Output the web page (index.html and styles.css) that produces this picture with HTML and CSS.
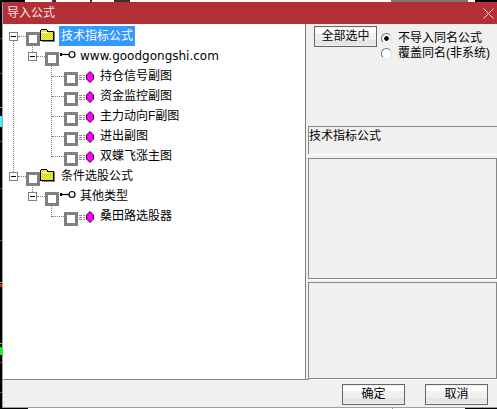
FILE: index.html
```html
<!DOCTYPE html>
<html lang="zh">
<head>
  <meta charset="UTF-8">
  <meta name="viewport" content="width=device-width, initial-scale=1.0">
  <title>导入公式</title>
  <link rel="stylesheet" href="styles.css">
</head>
<body>
  <svg class="defs" width="0" height="0">
    <defs>
      <pattern id="dither" width="2" height="2" patternUnits="userSpaceOnUse">
        <rect width="2" height="2" fill="#ffff00"/>
        <rect width="1" height="1" fill="#c8c860"/>
        <rect x="1" y="1" width="1" height="1" fill="#c8c860"/>
      </pattern>
      <symbol id="folder" viewBox="0 0 16 13">
        <path d="M.5 11.500V1.500L1.500 .5H6.500L8 2.500H13.500V11.500Z" fill="url(#dither)" stroke="#000" shape-rendering="crispEdges"/>
        <path d="M1 3.500H8" stroke="#fff" shape-rendering="crispEdges"/>
        <path d="M14.500 3V12.500H2" fill="none" stroke="#808080" shape-rendering="crispEdges"/>
      </symbol>
      <symbol id="key" viewBox="0 0 16 9">
        <path d="M1 3V6" stroke="#000" stroke-width="2"/>
        <path d="M1 4.500H10" stroke="#000" stroke-width="1.200"/>
        <circle cx="12" cy="4.500" r="3" fill="#fff" stroke="#000" stroke-width="1.200"/>
      </symbol>
      <symbol id="gem" viewBox="0 0 15 12">
        <path d="M0 4.500H6M0 6.500H6M0 8.500H6" stroke="#8c8c8c" stroke-dasharray="3 1"/>
        <path d="M11 .5L14.500 4V8L11 11.500L7.500 8V4Z" fill="#ff00ff" stroke="#300030"/>
      </symbol>
    </defs>
  </svg>

  <div class="dialog">
    <div class="titlebar">
      <span class="title">导入公式</span>
      <svg class="close" width="11" height="11" viewBox="0 0 11 11"><path d="M.5 .5L10.500 10.500M10.500 .5L.5 10.500" stroke="#f0d8d8"/></svg>
    </div>

    <div class="main">
      <ul class="tree">
        <li class="node">
          <div class="row">
            <span class="expander"></span><span class="dash"></span><span class="check"></span>
            <svg class="ico-folder"><use href="#folder"/></svg>
            <span class="label selected">技术指标公式</span>
          </div>
          <ul class="branch">
            <li class="node">
              <div class="row">
                <span class="expander"></span><span class="dash"></span><span class="check"></span>
                <svg class="ico-key"><use href="#key"/></svg>
                <span class="label plain latin">www.goodgongshi.com</span>
              </div>
              <ul class="leaves">
                <li class="row leaf"><span class="dash long"></span><span class="check"></span><svg class="ico-gem"><use href="#gem"/></svg><span class="label">持仓信号副图</span></li>
                <li class="row leaf"><span class="dash long"></span><span class="check"></span><svg class="ico-gem"><use href="#gem"/></svg><span class="label">资金监控副图</span></li>
                <li class="row leaf"><span class="dash long"></span><span class="check"></span><svg class="ico-gem"><use href="#gem"/></svg><span class="label">主力动向F副图</span></li>
                <li class="row leaf"><span class="dash long"></span><span class="check"></span><svg class="ico-gem"><use href="#gem"/></svg><span class="label">进出副图</span></li>
                <li class="row leaf"><span class="dash long"></span><span class="check"></span><svg class="ico-gem"><use href="#gem"/></svg><span class="label">双蝶飞涨主图</span></li>
              </ul>
            </li>
          </ul>
        </li>
        <li class="node">
          <div class="row">
            <span class="expander"></span><span class="dash"></span><span class="check"></span>
            <svg class="ico-folder"><use href="#folder"/></svg>
            <span class="label">条件选股公式</span>
          </div>
          <ul class="branch">
            <li class="node">
              <div class="row">
                <span class="expander"></span><span class="dash"></span><span class="check"></span>
                <svg class="ico-key"><use href="#key"/></svg>
                <span class="label plain">其他类型</span>
              </div>
              <ul class="leaves single">
                <li class="row leaf"><span class="dash long"></span><span class="check"></span><svg class="ico-gem"><use href="#gem"/></svg><span class="label">桑田路选股器</span></li>
              </ul>
            </li>
          </ul>
        </li>
      </ul>

      <div class="side">
        <div class="actions">
          <button class="btn select-all">全部选中</button>
          <div class="radios">
            <div class="radio-row"><span class="radio on"></span>不导入同名公式</div>
            <div class="radio-row"><span class="radio"></span>覆盖同名(非系统)</div>
          </div>
        </div>
        <div class="panel info">技术指标公式</div>
        <div class="panel middle"></div>
        <div class="panel lower"></div>
      </div>
    </div>

    <div class="footer">
      <button class="btn">确定</button>
      <button class="btn">取消</button>
    </div>
  </div>
</body>
</html>
```

FILE: styles.css
```css
/* Fondo: lo que asoma detras del dialogo */
html, body {
  margin: 0;
  height: 100%;
  overflow: hidden;
}

body {
  box-sizing: border-box;
  padding: 2px 0 1px 2px;
  background-color: #000;
  background-image:
    linear-gradient(to bottom,
      transparent 38px, #c02020 38px, #c02020 39px,
      transparent 39px, transparent 73px, #c02020 73px, #c02020 74px,
      transparent 74px, transparent 107px, #ff30ff 107px, #ff30ff 108px,
      transparent 108px, transparent 116px, #40f0ff 116px, #40f0ff 127px,
      transparent 127px, transparent 141px, #c02020 141px, #c02020 142px,
      transparent 142px, transparent 188px, #c02020 188px, #c02020 189px,
      transparent 189px, transparent 240px, #c02020 240px, #c02020 241px,
      transparent 241px, transparent 282px, #20e020 282px, #20e020 283px,
      transparent 283px, transparent 284px, #e02020 284px, #e02020 287px,
      transparent 287px, transparent 343px, #20e020 343px, #20e020 344px,
      transparent 344px, transparent 347px, #00ff00 347px, #00ff00 355px,
      transparent 355px, transparent 362px, #c02020 362px, #c02020 363px,
      transparent 363px, transparent 392px, #c02020 392px, #c02020 393px,
      transparent 393px),
    linear-gradient(to right, transparent 25px, #fff 25px, #fff 52px, #333 52px, #333 56px, #fff 56px, #fff 90px, #333 90px, #333 92px, #fff 92px, #fff 114px, #333 114px, #333 130px, #fff 130px, #fff 391px, #777 391px, #777 468px, #fff 468px, #fff 475px, transparent 475px),
    linear-gradient(to right, transparent 28px, #fff 28px, #fff 392px, #999 392px, #999 393px, #fff 393px, #fff 465px, transparent 465px);
  background-size: 2px 100%, 100% 2px, 100% 1px;
  background-position: 0 0, 0 0, 0 100%;
  background-repeat: no-repeat;
  font-family: "Liberation Sans", "Noto Sans CJK SC", sans-serif;
  font-size: 12px;
  color: #000;
}

.defs {
  position: absolute;
}

/* Dialogo */
.dialog {
  display: flex;
  flex-direction: column;
  height: 406px;
  box-sizing: border-box;
  border-left: 1px solid #a0a0a0;
  border-bottom: 1px solid #a0a0a0;
  background: #f0f0f0;
}

.titlebar {
  display: flex;
  align-items: center;
  justify-content: space-between;
  flex: 0 0 22px;
  padding: 0 3px 0 4px;
  background: #b23035;
  color: #f6e6e6;
}

.title {
  line-height: 22px;
}

.main {
  display: flex;
  flex: 0 0 356px;
  box-sizing: border-box;
  border-bottom: 1px solid #888;
}

/* Arbol */
.tree,
.tree ul {
  list-style: none;
  margin: 0;
  padding: 0;
}

.tree {
  position: relative;
  flex: 0 0 303px;
  box-sizing: border-box;
  padding-top: 2px;
  background: #fff;
  border-right: 1px solid #808080;
}

/* Lineas punteadas verticales */
.tree::before,
.branch::before,
.leaves::before {
  content: "";
  position: absolute;
  border-left: 1px dotted #808080;
}

.tree::before {
  left: 10px;
  top: 17px;
  height: 131px;
}

.node,
.branch,
.leaves {
  position: relative;
}

.branch::before {
  left: 29px;
  top: -1px;
  height: 7px;
}

.leaves::before {
  left: 48px;
  top: -1px;
  height: 92px;
}

.leaves.single::before {
  height: 12px;
}

.row {
  display: flex;
  align-items: flex-start;
  height: 20px;
  padding-left: 6px;
  white-space: nowrap;
}

.branch .row {
  padding-left: 25px;
}

.branch .leaf {
  padding-left: 49px;
}

.expander {
  position: relative;
  flex: none;
  box-sizing: border-box;
  width: 9px;
  height: 9px;
  margin-top: 6px;
  border: 1px solid #808080;
  background: #fff;
}

.expander::after {
  content: "";
  position: absolute;
  left: 1px;
  top: 3px;
  width: 5px;
  height: 1px;
  background: #000;
}

.dash {
  flex: none;
  width: 8px;
  height: 0;
  margin-top: 10px;
  border-top: 1px dotted #808080;
}

.dash.long {
  width: 12px;
}

.check {
  flex: none;
  box-sizing: border-box;
  width: 14px;
  height: 14px;
  margin-top: 6px;
  border: 3px solid #808080;
  background: #fff;
}

.ico-folder {
  flex: none;
  width: 16px;
  height: 13px;
  margin: 3px 3px 0 0;
}

.ico-key {
  flex: none;
  width: 16px;
  height: 9px;
  margin: 4px 4px 0 1px;
}

.ico-gem {
  flex: none;
  width: 15px;
  height: 12px;
  margin: 5px 6px 0 1px;
}

.label {
  line-height: 20px;
  padding: 0 2px;
}

.leaf .label,
.label.plain {
  padding: 0;
}

.label.latin {
  font-family: "DejaVu Sans", sans-serif;
  font-size: 12px;
}

.label.selected {
  background: #3399ff;
  color: #fff;
}

/* Columna derecha */
.side {
  display: flex;
  flex-direction: column;
  flex: 1;
  padding-left: 2px;
}

.actions {
  display: flex;
  flex: 0 0 102px;
  padding: 2px 0 0 6px;
  box-sizing: border-box;
}

.radios {
  margin: 5px 0 0 4px;
}

.radio-row {
  display: flex;
  align-items: center;
  height: 15px;
  line-height: 15px;
  white-space: nowrap;
}

.radio {
  box-sizing: border-box;
  flex: none;
  width: 11px;
  height: 11px;
  margin-right: 6px;
  border-radius: 50%;
  border: 1px solid;
  border-color: #777 #ddd #eee #777;
  background: #fff;
}

.radio.on {
  background: radial-gradient(circle, #000 0 2px, #f4f4f4 2.5px);
}

.panel {
  box-sizing: border-box;
  border: 1px solid #888;
  box-shadow: 1px 1px 0 #fff;
}

.panel.info {
  flex: 0 0 28px;
  border-right: 0;
  border-bottom: 0;
  line-height: 18px;
}

.panel.middle {
  flex: 0 0 121px;
  margin-top: 4px;
}

.panel.lower {
  flex: 0 0 97px;
  margin-top: 3px;
}

/* Botones */
.btn {
  flex: none;
  box-sizing: border-box;
  width: 63px;
  height: 21px;
  padding: 0;
  border: 1px solid #666;
  background: linear-gradient(to bottom, #f0f0f0 1px, #fff 1px, #fff 6px, #f0f0f0 6px, #f0f0f0 13px, #e5e5e5 13px, #e5e5e5 18px, #f0f0f0 18px);
  font: inherit;
  line-height: 17px;
  color: #000;
}

.footer {
  display: flex;
  justify-content: flex-end;
  gap: 20px;
  padding: 4px 9px 0 0;
}
```
